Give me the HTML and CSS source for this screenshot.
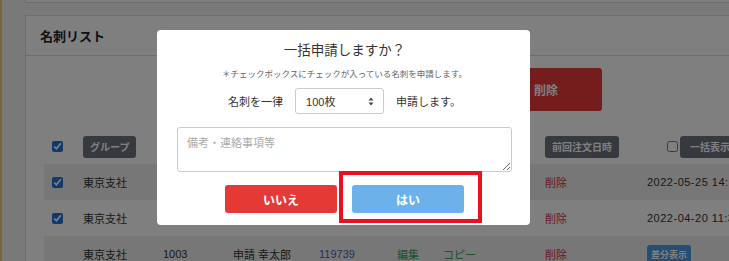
FILE: index.html
```html
<!DOCTYPE html>
<html lang="ja">
<head>
    <meta charset="UTF-8">
    <meta name="viewport" content="width=device-width, initial-scale=1.0">
    <title>名刺リスト</title>
    <link rel="stylesheet" href="styles.css">
</head>
<body>
    <div class="page">
        <div class="card card-top"></div>
        <div class="card">
            <div class="card-header">名刺リスト</div>
            <div class="card-body">
                <div class="actions">
                    <button class="btn btn-danger btn-lg">削除</button>
                </div>
                <div class="table">
                    <div class="tr th">
                        <div class="td"><input type="checkbox" checked></div>
                        <div class="td"><span class="btn btn-sm">グループ</span></div>
                        <div class="td"></div>
                        <div class="td"></div>
                        <div class="td"></div>
                        <div class="td"></div>
                        <div class="td"></div>
                        <div class="td"><span class="btn btn-sm">前回注文日時</span></div>
                        <div class="td td-all"><input type="checkbox" class="cb-plain"><span class="btn btn-sm btn-wide">一括表示</span></div>
                    </div>
                    <div class="tr striped">
                        <div class="td"><input type="checkbox" checked></div>
                        <div class="td">東京支社</div>
                        <div class="td">1001</div>
                        <div class="td">申請 花子</div>
                        <div class="td link">119737</div>
                        <div class="td green">編集</div>
                        <div class="td green">コピー</div>
                        <div class="td red">削除</div>
                        <div class="td date">2022-05-25 14:12</div>
                    </div>
                    <div class="tr">
                        <div class="td"><input type="checkbox" checked></div>
                        <div class="td">東京支社</div>
                        <div class="td">1002</div>
                        <div class="td">申請 次郎</div>
                        <div class="td link">119738</div>
                        <div class="td green">編集</div>
                        <div class="td green">コピー</div>
                        <div class="td red">削除</div>
                        <div class="td date">2022-04-20 11:35</div>
                    </div>
                    <div class="tr striped">
                        <div class="td"></div>
                        <div class="td">東京支社</div>
                        <div class="td">1003</div>
                        <div class="td">申請 幸太郎</div>
                        <div class="td link">119739</div>
                        <div class="td green">編集</div>
                        <div class="td green">コピー</div>
                        <div class="td red">削除</div>
                        <div class="td"><span class="badge">差分表示</span></div>
                    </div>
                </div>
            </div>
        </div>
    </div>

    <div class="backdrop"></div>

    <div class="modal">
        <div class="modal-title">一括申請しますか？</div>
        <div class="modal-note">＊チェックボックスにチェックが入っている名刺を申請します。</div>
        <div class="modal-row">
            <span>名刺を一律</span>
            <div class="select">
                <span>100枚</span>
                <svg width="6" height="9" viewBox="0 0 6 9">
                    <path d="M0.5 3.5 L3 0.5 L5.5 3.5 Z M0.5 5.5 L3 8.5 L5.5 5.5 Z" fill="#444"/>
                </svg>
            </div>
            <span>申請します。</span>
        </div>
        <textarea class="memo" placeholder="備考・連絡事項等"></textarea>
        <div class="modal-buttons">
            <button class="btn-modal btn-no">いいえ</button>
            <button class="btn-modal btn-yes">はい</button>
        </div>
    </div>

    <div class="highlight"></div>
</body>
</html>
```

FILE: styles.css
```css
body {
    margin: 0;
    height: 261px;
    overflow: hidden;
    background-color: #f3f3f3;
    border-left: 2px solid #f0cc72;
    font-family: 'Liberation Sans', 'Noto Sans CJK JP', sans-serif;
    color: #333;
}
.page {
    width: 900px;
    padding-left: 23px;
}
.card {
    background-color: #fff;
    border: 1px solid #dcdcdc;
}
.card-top {
    height: 2px;
    border-top: none;
    margin-bottom: 12px;
}
.card-header {
    display: flex;
    align-items: center;
    height: 40px;
    box-sizing: border-box;
    padding-left: 14px;
    padding-bottom: 1px;
    border-bottom: 1px solid #dcdcdc;
    font-size: 13px;
    font-weight: bold;
    color: #222;
}
.card-body {
    padding: 12px 0 0 18px;
}
.actions {
    display: flex;
    height: 43px;
}
.btn {
    display: inline-flex;
    align-items: center;
    justify-content: center;
    border: none;
    border-radius: 3px;
    color: #fff;
    font-family: inherit;
    font-weight: bold;
    background-color: #6c757d;
}
.btn-danger {
    background-color: #e83a38;
}
.btn-lg {
    margin-left: 446px;
    width: 112px;
    height: 43px;
    font-size: 12px;
}
.btn-sm {
    height: 22px;
    padding: 0 7px;
    font-size: 10px;
}
.btn-wide {
    padding: 0 10px;
}
.table {
    margin-top: 17px;
}
.tr {
    display: grid;
    grid-template-columns: 31px 80px 70px 86px 78px 46px 102px 102px 1fr;
    height: 36px;
    font-size: 11px;
}
.striped {
    background-color: #efefef;
}
.td {
    display: flex;
    align-items: center;
    padding-left: 8px;
    white-space: nowrap;
}
.th .td {
    padding-top: 1px;
}
.td-all {
    padding-left: 28px;
}
.date {
    letter-spacing: 0.5px;
}
input[type="checkbox"] {
    width: 11px;
    height: 11px;
    margin: 0;
    accent-color: #2372d6;
}
.cb-plain {
    margin-right: 2px !important;
    align-self: flex-start;
    margin-top: 12px !important;
}
.link {
    color: #4a66b8;
}
.green {
    color: #3aa556;
}
.red {
    color: #d7303e;
}
.badge {
    display: inline-flex;
    align-items: center;
    height: 18px;
    padding: 0 4px;
    border-radius: 3px;
    background-color: #4d9ae4;
    color: #fff;
    font-size: 9px;
    font-weight: bold;
}
.backdrop {
    position: fixed;
    inset: 0;
    background-color: rgba(0, 0, 0, 0.5);
}
.modal {
    position: absolute;
    left: 157px;
    top: 30px;
    width: 373px;
    height: 195px;
    box-sizing: border-box;
    padding: 9px 18px 12px 20px;
    background-color: #fff;
    border-radius: 4px;
    display: flex;
    flex-direction: column;
    align-items: center;
    font-family: 'Noto Sans CJK JP', sans-serif;
}
.modal-title {
    font-size: 13.5px;
    line-height: 20px;
    color: #333;
}
.modal-note {
    margin-top: 8px;
    font-size: 8.5px;
    line-height: 12px;
    color: #666;
}
.modal-row {
    margin-top: 9px;
    display: flex;
    align-items: center;
    gap: 12px;
    height: 26px;
    font-size: 11px;
    color: #333;
}
.select {
    display: flex;
    align-items: center;
    justify-content: space-between;
    width: 89px;
    height: 26px;
    box-sizing: border-box;
    padding: 0 9px 0 10px;
    border: 1px solid #ccc;
    border-radius: 3px;
    font-family: 'Liberation Sans', 'Noto Sans CJK JP', sans-serif;
}
.memo {
    margin: 13px 0 0 0;
    align-self: stretch;
    height: 45px;
    box-sizing: border-box;
    padding: 6px 9px;
    border: 1px solid #ccc;
    border-radius: 3px;
    font-family: 'Noto Sans CJK JP', sans-serif;
    font-size: 11px;
    color: #333;
}
.memo::placeholder {
    color: #aaa;
}
.modal-buttons {
    margin-top: 13px;
    display: flex;
    gap: 15px;
}
.btn-modal {
    width: 112px;
    height: 28px;
    border: none;
    border-radius: 3px;
    color: #fff;
    font-family: 'Noto Sans CJK JP', sans-serif;
    font-size: 12px;
    font-weight: bold;
}
.btn-no {
    background-color: #e53935;
}
.btn-yes {
    background-color: #6cb1e9;
}
.highlight {
    position: absolute;
    left: 339px;
    top: 171px;
    width: 143px;
    height: 52px;
    box-sizing: border-box;
    border: 4px solid #e8111d;
}
```
